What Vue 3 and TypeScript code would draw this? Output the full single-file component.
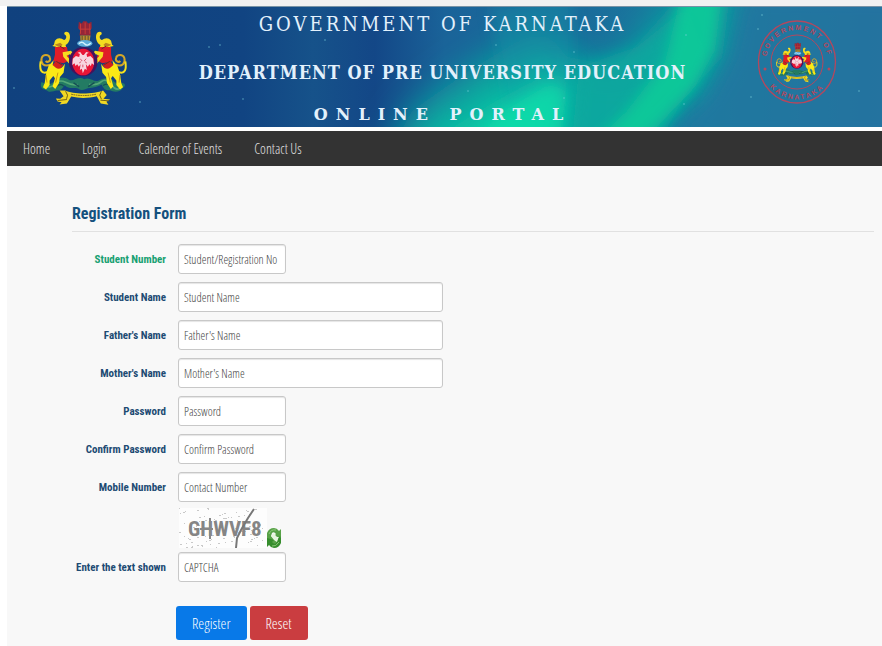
<script setup lang="ts">
import { reactive, ref } from 'vue'

interface Field {
  id: string
  label: string
  placeholder: string
  type: 'text' | 'password' | 'tel'
  wide?: boolean
  accent?: boolean
}

const navItems: string[] = ['Home', 'Login', 'Calender of Events', 'Contact Us']

const fields: Field[] = [
  { id: 'studentNumber', label: 'Student Number', placeholder: 'Student/Registration No', type: 'text', accent: true },
  { id: 'studentName', label: 'Student Name', placeholder: 'Student Name', type: 'text', wide: true },
  { id: 'fatherName', label: "Father's Name", placeholder: "Father's Name", type: 'text', wide: true },
  { id: 'motherName', label: "Mother's Name", placeholder: "Mother's Name", type: 'text', wide: true },
  { id: 'password', label: 'Password', placeholder: 'Password', type: 'password' },
  { id: 'confirmPassword', label: 'Confirm Password', placeholder: 'Confirm Password', type: 'password' },
  { id: 'mobile', label: 'Mobile Number', placeholder: 'Contact Number', type: 'tel' },
]

const form = reactive<Record<string, string>>({})
const captcha = ref('')

function reset(): void {
  for (const field of fields) form[field.id] = ''
  captcha.value = ''
}

interface Dot { x: number; y: number; w: number }

// Speckle behind the captcha letters
const specks: Dot[] = Array.from({ length: 95 }, (_, i) => ({
  x: (i * 37 + ((i * i) % 11)) % 84,
  y: (i * 17 + ((i * 5) % 7)) % 40,
  w: 1 + (i % 2),
}))

const stars: Dot[] = [
  { x: 7, y: 81, w: 1 }, { x: 202, y: 40, w: 1 }, { x: 213, y: 38, w: 1 }, { x: 236, y: 92, w: 1 },
  { x: 318, y: 33, w: 1 }, { x: 461, y: 84, w: 1 }, { x: 567, y: 45, w: 1 }, { x: 557, y: 91, w: 1 },
  { x: 755, y: 8, w: 1 }, { x: 751, y: 22, w: 1 }, { x: 852, y: 84, w: 1 }, { x: 677, y: 97, w: 1 },
  { x: 679, y: 28, w: 1 }, { x: 489, y: 38, w: 1 }, { x: 744, y: 90, w: 1 }, { x: 133, y: 95, w: 1 },
]
</script>

<template>
  <div class="page">
    <svg class="defs" width="0" height="0" aria-hidden="true">
      <defs>
        <symbol id="beast" viewBox="0 0 320 285" overflow="visible">
          <path d="M62 150C42 158 32 145 36 130C40 118 58 118 61 130C64 139 54 145 48 139" fill="none" stroke="#d4a728" stroke-width="6" />
          <path d="M33 140C29 165 34 178 52 173C62 170 62 162 70 157" fill="none" stroke="#f6e11c" stroke-width="6" />
          <path d="M76 78C84 66 96 70 104 76C112 71 112 62 105 59C101 52 110 48 117 53C125 62 122 83 108 91L112 106L80 106L79 96L68 94L73 90L76 78Z" fill="#f4dd20" />
          <path d="M75 90L92 84L99 90L91 98Z" fill="#bb8520" />
          <path d="M76 97L112 97L120 137L102 146L71 140L76 120Z" fill="#e01d27" />
          <path d="M80 138L69 150L70 160L78 168L91 167L101 150Z" fill="#d2211d" />
          <path d="M72 137L57 153L50 174L45 206L40 218L49 225L60 211L60 198L71 184L76 191L69 216L77 223L88 206L91 187L102 174L106 147C91 172 79 161 69 151Z" fill="#fae916" />
          <path d="M99 113L124 108C132 115 135 121 142 128L136 136L121 119L111 123L127 141L138 151L132 158L117 145L101 126Z" fill="#f5dd20" />
          <path d="M91 94L105 103M80 140L97 151" stroke="#6d272b" stroke-width="3" />
          <path d="M49 181L52 204M85 174L78 204" stroke="#c99a16" stroke-width="3" />
        </symbol>
        <symbol id="emblem" viewBox="28 15 268 260">
          <path d="M36 202C30 211 35 226 48 225C60 239 73 227 82 228C96 229 99 218 106 212C117 227 139 215 149 224C160 231 172 219 182 220C195 220 208 215 216 210C224 222 225 229 242 227C255 235 276 231 280 220C292 214 286 204 277 205C263 212 254 202 248 195C234 187 218 191 205 199C191 202 180 185 164 194C148 183 132 202 119 196C103 185 84 187 75 200C66 210 52 212 36 202Z" fill="#237b63" />
          <path d="M43 210Q60 225 74 209T108 203T145 210M179 209Q202 213 216 201T247 212T278 213" fill="none" stroke="#54a978" stroke-width="5" />
          <path d="M75 219Q91 203 103 215M221 213Q235 202 249 219M132 205L149 216M176 216L195 204" fill="none" stroke="#154f55" stroke-width="4" />
          <use href="#beast" width="320" height="285" />
          <use href="#beast" width="320" height="285" transform="translate(321 0) scale(-1 1)" />
          <path d="M148 21L157 26L161 19L171 19L176 26L186 21L187 40L182 46L184 62L150 62L152 46L146 40Z" fill="#942638" />
          <path d="M153 27V57M181 27V57M167 23V58M150 43H184" stroke="#c83b38" stroke-width="3" />
          <path d="M152 62H183L181 78H153Z" fill="#ba8f31" />
          <path d="M158 63V77M167 63V77M176 63V77" stroke="#5c512e" stroke-width="3" />
          <ellipse cx="166" cy="86" rx="23" ry="10" fill="#5daddb" />
          <path d="M148 87Q157 78 165 87T184 85" fill="none" stroke="#d3f4ff" stroke-width="4" />
          <ellipse cx="161" cy="141" rx="43" ry="44" fill="#42145e" />
          <ellipse cx="161" cy="142" rx="33" ry="40" fill="#e71536" />
          <path d="M159 121L152 112L144 114L151 118L149 127L139 124L130 132L128 151L135 146L138 154L143 149L148 156L153 149L151 166L157 162L160 176L166 162L172 166L169 149L175 156L180 149L184 155L187 146L194 151L191 132L183 124L173 127L171 118L178 114L170 112L163 121Z" fill="#f8d5df" />
          <path d="M152 132L158 139M170 132L164 139M149 145L155 141M172 145L166 141M160 150V158" stroke="#d9546d" stroke-width="3" />
          <path d="M90 228L102 245L92 253L79 252L84 261L96 263L90 270L112 267L125 246C151 252 178 251 202 245L214 267L237 271L231 262L242 255L222 253L232 241L221 228C194 239 133 241 107 228Z" fill="#f1d824" />
          <path d="M108 230L114 242L111 253M216 230L211 242L216 254M84 258L112 255M213 257L239 259" fill="none" stroke="#746213" stroke-width="3" />
          <path d="M125 239Q162 247 200 239" fill="none" stroke="#725e20" stroke-width="3" stroke-dasharray="5 2" />
        </symbol>
      </defs>
    </svg>

    <header class="banner">
      <svg class="aurora" viewBox="0 0 875 120" preserveAspectRatio="none" aria-hidden="true">
        <defs>
          <linearGradient id="sky" x1="0" x2="1">
            <stop offset="0" stop-color="#10417e" />
            <stop offset="0.27" stop-color="#114482" />
            <stop offset="0.35" stop-color="#16528a" />
            <stop offset="0.42" stop-color="#134787" />
            <stop offset="0.5" stop-color="#1a6399" />
            <stop offset="0.65" stop-color="#1a6a9b" />
            <stop offset="0.8" stop-color="#1b809f" />
            <stop offset="1" stop-color="#28709f" />
          </linearGradient>
          <filter id="glow" x="-40%" y="-40%" width="180%" height="180%"><feGaussianBlur stdDeviation="18" /></filter>
          <filter id="soft" x="-40%" y="-40%" width="180%" height="180%"><feGaussianBlur stdDeviation="7" /></filter>
        </defs>
        <rect width="875" height="120" fill="url(#sky)" />
        <path d="M375 160L405 104L465 62L535 20L560 50L610 60L690 -30L725 -30L715 50L660 110L607 170Z" fill="#10a49f" filter="url(#glow)" />
        <path d="M483 0L566 -10L566 100L500 100Z" fill="#178ba5" opacity="0.5" filter="url(#soft)" />
        <path d="M403 160L448 119L489 94L530 72L562 58L560 92L550 160Z" fill="#0ce0aa" opacity="0.7" filter="url(#glow)" />
        <path d="M440 165L493 106L544 76L560 85L546 165Z" fill="#08e2ab" opacity="0.6" filter="url(#soft)" />
        <path d="M562 165L572 60L630 40L680 0L700 50L635 165Z" fill="#0ca89f" opacity="0.8" filter="url(#soft)" />
        <path d="M550 170L619 105L658 55L676 -20L716 -20L708 43L688 80L640 130L607 170Z" fill="#0bcd99" opacity="0.85" filter="url(#soft)" />
        <path d="M660 130L702 91L724 51L738 -8L890 -8L890 130Z" fill="#2374a0" opacity="0.65" filter="url(#soft)" />
        <circle v-for="(star, i) in stars" :key="i" :cx="star.x" :cy="star.y" :r="star.w" fill="#7ed1dc" opacity="0.4" />
      </svg>

      <svg class="crest" role="img" aria-label="Karnataka state emblem"><use href="#emblem" /></svg>

      <div class="titles">
        <div class="title-state">GOVERNMENT OF KARNATAKA</div>
        <h1 class="title-dept">DEPARTMENT OF PRE UNIVERSITY EDUCATION</h1>
        <div class="title-portal">ONLINE PORTAL</div>
      </div>

      <svg class="seal" viewBox="0 0 80 84" role="img" aria-label="Government of Karnataka seal">
        <defs>
          <path id="arcTop" d="M10 50A31 32 0 1 1 70 50" />
          <path id="arcBottom" d="M5 51A36 37 0 0 0 75 51" />
        </defs>
        <g fill="none" stroke="#b5475d">
          <ellipse cx="40" cy="42" rx="38.5" ry="41" stroke-width="1.3" />
          <ellipse cx="40" cy="42" rx="26" ry="27" />
        </g>
        <text class="seal-text"><textPath href="#arcTop" startOffset="50%" text-anchor="middle">GOVERNMENT OF</textPath></text>
        <text class="seal-text"><textPath href="#arcBottom" startOffset="50%" text-anchor="middle">KARNATAKA</textPath></text>
        <circle cx="8" cy="49" r="1.5" fill="#b5475d" /><circle cx="72" cy="49" r="1.5" fill="#b5475d" />
        <use href="#emblem" x="19" y="22" width="42" height="41" />
      </svg>
    </header>

    <nav class="nav">
      <a v-for="item in navItems" :key="item" href="#">{{ item }}</a>
    </nav>

    <main class="content">
      <h2 class="heading">Registration Form</h2>

      <form class="form" @submit.prevent @reset.prevent="reset">
        <div v-for="field in fields" :key="field.id" class="row">
          <label :for="field.id" :class="{ accent: field.accent }">{{ field.label }}</label>
          <input :id="field.id" v-model="form[field.id]" :type="field.type" :placeholder="field.placeholder" :class="{ wide: field.wide }">
        </div>

        <div class="captcha">
          <svg class="captcha-image" viewBox="0 0 88 40" role="img" aria-label="Captcha challenge">
            <rect width="88" height="40" fill="#fdfdfd" />
            <rect v-for="(dot, i) in specks" :key="i" :x="dot.x" :y="dot.y" :width="dot.w" height="1" fill="#c9c9c9" />
            <text class="captcha-letters" x="9" y="28">GHWVF8</text>
            <path d="M75 1L69 10L62 22L58 30L57 40" fill="none" stroke="#777" stroke-width="2" />
            <path d="M21 21H34M31 10V31" stroke="#888" stroke-width="2" />
          </svg>
          <button type="button" class="refresh" aria-label="Refresh captcha">
            <svg viewBox="0 0 14 20" aria-hidden="true">
              <path d="M0 9V5Q2 0 7 0Q10 0 12 3L14 1V10L7 8L9 6Q7 3 5 5L4 8L10 14Q9 17 5 16L0 12Z" fill="#58a248" />
              <path d="M14 10V15Q12 20 7 20Q4 20 2 17L0 19V10L7 12L5 14Q7 17 9 15L10 12L13 8Z" fill="#368d2d" />
              <path d="M4 8L7 5L11 11L10 14L7 12Z" fill="#e7f5df" />
              <path d="M2 6Q4 1 9 2M12 14Q9 19 5 18" fill="none" stroke="#8bc879" />
            </svg>
          </button>
        </div>

        <div class="row">
          <label for="captcha">Enter the text shown</label>
          <input id="captcha" v-model="captcha" type="text" placeholder="CAPTCHA" autocomplete="off">
        </div>

        <div class="actions">
          <button type="submit" class="btn primary">Register</button>
          <button type="reset" class="btn danger">Reset</button>
        </div>
      </form>
    </main>
  </div>
</template>

<style>
body {
  background: #fff;
}
</style>

<style scoped>
.page {
  --ui: "Roboto Condensed", "Open Sans Condensed", "Liberation Sans", sans-serif;
  --light: "Open Sans Condensed Light", "Open Sans Condensed", "Open Sans", sans-serif;
  min-height: 100vh;
  box-sizing: border-box;
  display: flex;
  flex-direction: column;
  padding-left: 7px;
  border-top: 6px solid #f1f1f1;
  font-family: var(--ui);
}

.defs {
  position: absolute;
}

.banner {
  position: relative;
  display: grid;
  grid-template-columns: 89px 1fr 80px;
  align-items: center;
  padding: 0 45px 0 32px;
  border-top: 1px solid #7893a6;
  overflow: hidden;
}

.aurora {
  position: absolute;
  inset: 0;
  width: 100%;
  height: 100%;
  z-index: -1;
}

.crest {
  width: 89px;
  height: 88px;
  margin-bottom: 8px;
}

.seal {
  width: 80px;
  height: 84px;
  margin-bottom: 10px;
}

.seal-text {
  font: bold 7px "Liberation Sans", sans-serif;
  letter-spacing: 2px;
  fill: #b5475d;
}

.titles {
  padding: 7px 0 2px;
  color: #e3f1fc;
  text-align: center;
  white-space: nowrap;
  line-height: 20px;
  font-family: "DejaVu Serif Condensed", "DejaVu Serif", serif;
}

.title-state {
  font-size: 20px;
  letter-spacing: 3px;
}

.title-dept {
  margin: 29px 0 22px;
  font-size: 18px;
  line-height: 20px;
  font-weight: bold;
  letter-spacing: 1px;
}

.title-portal {
  font-family: "DejaVu Serif", serif;
  font-size: 16px;
  font-weight: bold;
  letter-spacing: 8px;
}

.nav {
  display: flex;
  gap: 32px;
  margin-top: 4px;
  padding: 0 16px;
  background: #333;
}

.nav a {
  color: #e0e0e0;
  font-family: var(--light);
  font-weight: 300;
  font-size: 14px;
  line-height: 35px;
  text-decoration: none;
  white-space: nowrap;
}

.content {
  flex: 1;
  padding: 34px 8px 6px 65px;
  background: #f8f8f8;
}

.heading {
  margin: 0 0 12px;
  padding-bottom: 4px;
  border-bottom: 1px solid #e1e1e1;
  color: #15517e;
  font-size: 16px;
  line-height: 27px;
}

.row {
  display: grid;
  grid-template-columns: 94px 1fr;
  align-items: center;
  gap: 12px;
  margin-bottom: 8px;
}

.row label {
  color: #1d4b73;
  font-size: 11px;
  font-weight: bold;
  text-align: right;
  white-space: nowrap;
  justify-self: end;
}

.row label.accent {
  color: #17a071;
}

.row input {
  box-sizing: border-box;
  width: 108px;
  height: 30px;
  padding: 0 5px;
  border: 1px solid #c8c8c8;
  border-radius: 3px;
  background: #fff;
  box-shadow: inset 0 1px 1px #e5e5e5;
  color: #444;
  font: 300 12px var(--light);
}

.row input.wide {
  width: 265px;
}

.row input::placeholder {
  color: #444;
}

.captcha {
  display: flex;
  align-items: flex-end;
  padding-left: 107px;
  margin: -2px 0 4px;
}

.captcha-image {
  width: 88px;
  height: 40px;
}

.captcha-letters {
  fill: #858585;
  font: bold 21px "Roboto Condensed", "Open Sans Condensed", sans-serif;
}

.refresh {
  display: flex;
  padding: 0;
  border: 0;
  background: none;
}

.refresh svg {
  width: 14px;
  height: 20px;
}

.actions {
  display: flex;
  gap: 3px;
  padding: 16px 0 0 104px;
}

.btn {
  height: 34px;
  padding: 0 16px;
  border: 0;
  border-radius: 3px;
  color: #fff;
  font: 300 15px var(--light);
}

.primary {
  background: #0879e8;
}

.danger {
  background: #ca3d40;
}
</style>
